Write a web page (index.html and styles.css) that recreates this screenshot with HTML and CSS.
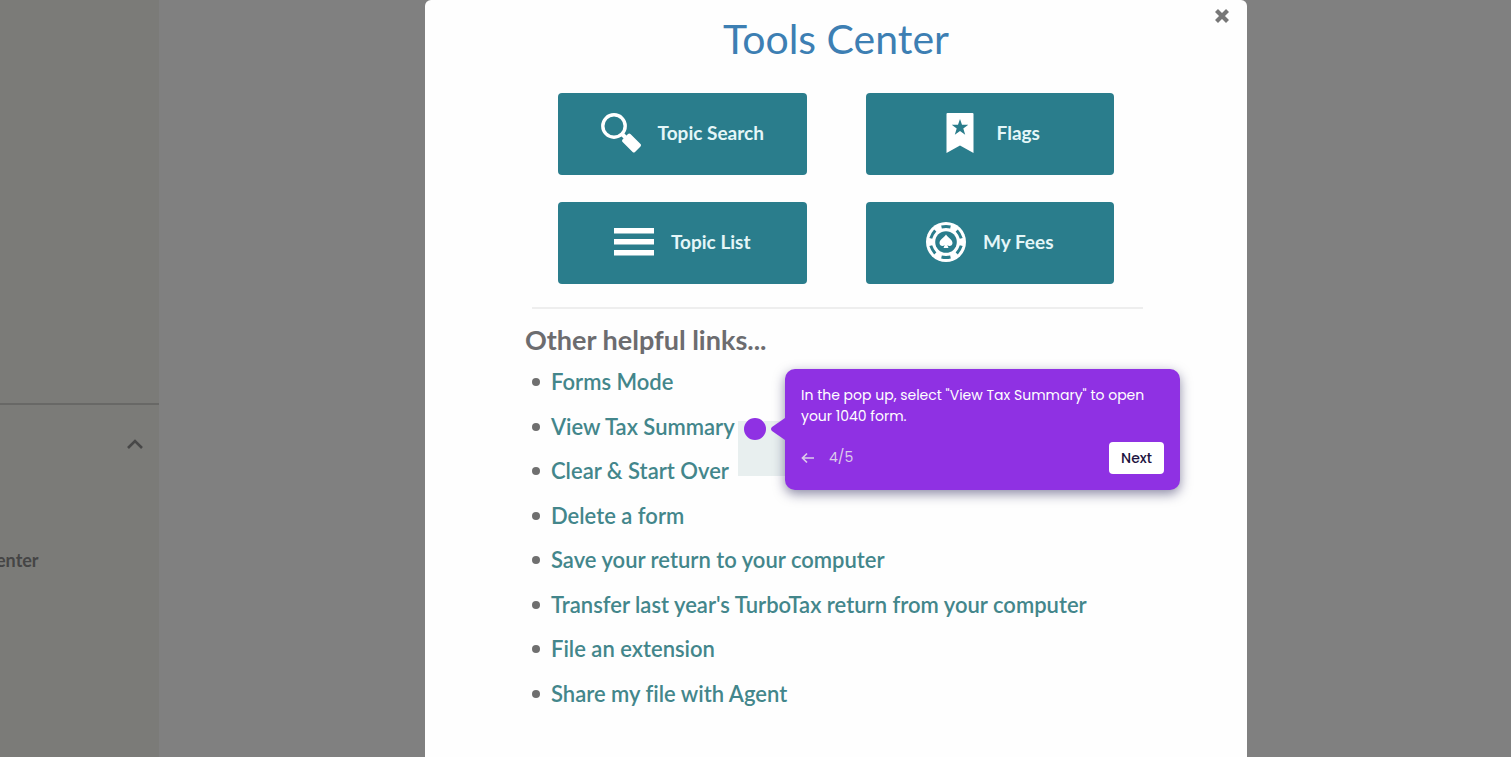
FILE: index.html
```html
<!DOCTYPE html>
<html lang="en">
<head>
<meta charset="utf-8">
<meta name="viewport" content="width=device-width, initial-scale=1">
<title>Tools Center</title>
<link rel="stylesheet" href="styles.css">
</head>
<body class="page">
  <aside class="sidebar">
    <section class="sidebar-top"></section>
    <section class="sidebar-menu">
      <button class="collapse" type="button" aria-label="Collapse">
        <svg width="18" height="12" viewBox="0 0 18 12"><path d="M2 10 9 3l7 7" fill="none" stroke="currentColor" stroke-width="2.6"/></svg>
      </button>
      <a class="sidebar-link" href="#">enter</a>
    </section>
  </aside>
  <main class="stage">
    <div class="modal" role="dialog" aria-labelledby="title">
      <button class="close" type="button" aria-label="Close">
        <svg width="16" height="16" viewBox="0 0 16 16"><path d="m2.500 2.500 11 11m0-11-11 11" stroke="currentColor" stroke-width="4.200"/></svg>
      </button>
      <h1 class="title" id="title">Tools Center</h1>
      <div class="tools">
        <button class="tool" type="button">
          <svg width="40" height="40" viewBox="0 0 40 40"><circle cx="13" cy="13" r="11.200" fill="none" stroke="#fff" stroke-width="3.400"/><path d="m20 20 5 5" stroke="#fff" stroke-width="4"/><path d="m21.500 26.500 5.500-5.500q1.500-.9 2.700.3L39.500 31q1 1.200 0 2.400L34 39q-1.200 1-2.400 0l-10-10q-1-1.200-.1-2.500z" fill="#fff"/></svg>
          <span>Topic Search</span>
        </button>
        <button class="tool" type="button">
          <svg width="40" height="40" viewBox="-6 0 40 40"><path fill="#fff" fill-rule="evenodd" d="M1.500 0h25q1 0 1 1v39L14 32.500.5 40V1q0-1 1-1zM14 6l-2 5.800H5.700l5 3.700-1.900 6.300 5.200-3.700 5.200 3.700-1.900-6.300 5-3.700H16z"/></svg>
          <span>Flags</span>
        </button>
        <button class="tool" type="button">
          <svg width="40" height="28" viewBox="0 0 40 28"><path fill="#fff" d="M0 0h40v5.500H0zM0 11h40v5.500H0zM0 22h40v5.500H0z"/></svg>
          <span>Topic List</span>
        </button>
        <button class="tool" type="button">
          <svg width="40" height="40" viewBox="0 0 40 40"><circle cx="20" cy="20" r="20" fill="#fff"/><g fill="none" stroke="#2a7d8c" stroke-width="3"><path id="notch" d="M15.500 5q4.500-1 9 0"/><use href="#notch" transform="rotate(60 20 20)"/><use href="#notch" transform="rotate(120 20 20)"/><use href="#notch" transform="rotate(180 20 20)"/><use href="#notch" transform="rotate(240 20 20)"/><use href="#notch" transform="rotate(300 20 20)"/></g><circle cx="20" cy="20" r="10.800" fill="#2a7d8c"/><path fill="#fff" d="M20 12.500c1.500 3 6.500 5 6.500 8.500 0 3-3.500 3.800-5.200 2l1.200 3h-5l1.200-3c-1.700 1.800-5.200 1-5.200-2 0-3.500 5-5.500 6.500-8.500z"/></svg>
          <span>My Fees</span>
        </button>
      </div>
      <hr class="divider">
      <h2 class="subtitle">Other helpful links...</h2>
      <ul class="links">
        <li><a href="#">Forms Mode</a></li>
        <li>
          <a href="#">View Tax Summary</a>
          <div class="hint">
            <span class="hint-dot"></span>
            <svg class="hint-arrow" width="14" height="22" viewBox="0 0 14 22"><path fill="#8f31e3" d="M14 0v22L1 13q-2-2 0-4z"/></svg>
            <div class="hint-card">
              <p class="hint-text">In the pop up, select "View Tax Summary" to open your 1040 form.</p>
              <div class="hint-bar">
                <button class="hint-back" type="button" aria-label="Back">
                  <svg width="14" height="12" viewBox="0 0 14 12"><path d="M6 1.500 1.500 6 6 10.500M1.500 6H13" fill="none" stroke="currentColor" stroke-width="1.700"/></svg>
                </button>
                <span class="hint-step">4/5</span>
                <button class="hint-next" type="button">Next</button>
              </div>
            </div>
          </div>
        </li>
        <li><a href="#">Clear &amp; Start Over</a></li>
        <li><a href="#">Delete a form</a></li>
        <li><a href="#">Save your return to your computer</a></li>
        <li><a href="#">Transfer last year's TurboTax return from your computer</a></li>
        <li><a href="#">File an extension</a></li>
        <li><a href="#">Share my file with Agent</a></li>
      </ul>
    </div>
  </main>
</body>
</html>
```
FILE: styles.css
```css
* { box-sizing: border-box; }

.page {
  margin: 0;
  min-height: 100vh;
  display: grid;
  grid-template-columns: 159px 1fr;
  background: #808080;
  font-family: "Avenir Next", Lato, sans-serif;
  font-variant-ligatures: none;
}

button {
  border: 0;
  padding: 0;
  background: none;
  font: inherit;
  cursor: pointer;
}

svg { display: block; flex: none; }

.sidebar {
  display: grid;
  grid-template-rows: 405px 1fr;
  background: #7b7b78;
  color: #454545;
}

.sidebar-top { border-bottom: 2px solid #686866; }

.sidebar-menu {
  display: flex;
  flex-direction: column;
  align-items: flex-start;
  gap: 98px;
  padding: 33px 15px 0 0;
}

.collapse { align-self: flex-end; color: #484848; }

.sidebar-link {
  color: inherit;
  font-size: 18px;
  font-weight: 700;
  line-height: 24px;
  text-decoration: none;
  margin-left: -4px;
}

.stage {
  display: flex;
  justify-content: center;
  padding-left: 2px;
}

.modal {
  position: relative;
  width: 822px;
  max-width: 100%;
  padding: 15px 100px 40px;
  background: #fefefe;
  border-radius: 6px 6px 0 0;
}

.close {
  position: absolute;
  top: 8px;
  right: 17px;
  color: #777;
}

.title {
  margin: 0;
  color: #3d7fb3;
  font-size: 41px;
  font-weight: 400;
  line-height: 48px;
  text-align: center;
}

.tools {
  display: grid;
  grid-template-columns: 1fr 1fr;
  grid-auto-rows: 82px;
  gap: 27px 59px;
  margin: 30px 33px 0;
}

.tool {
  display: flex;
  align-items: center;
  justify-content: center;
  gap: 17px;
  padding-bottom: 3px;
  border-radius: 4px;
  background: #2a7d8c;
  color: #e4f6f8;
  font-size: 19px;
  font-weight: 700;
}

.divider {
  margin: 23px 4px 0 7px;
  border: 0;
  border-top: 2px solid #eee;
}

.subtitle {
  margin: 14px 0 0;
  color: #6c6c6f;
  font-size: 27px;
  font-weight: 700;
  line-height: 34px;
}

.links {
  display: grid;
  grid-auto-rows: 1fr;
  min-height: 356px;
  margin: 3px 0 0;
  padding: 0;
  list-style: none;
}

.links li {
  position: relative;
  display: flex;
  align-items: center;
  gap: 11px;
  padding-left: 7px;
}

.links li::before {
  content: "";
  width: 8px;
  height: 8px;
  border-radius: 50%;
  background: #6f6f6f;
}

.links a {
  color: #43868b;
  font-size: 22px;
  font-weight: 600;
  line-height: 30px;
  text-decoration: none;
}

.hint {
  position: absolute;
  z-index: 1;
  top: 16px;
  left: 213px;
  width: 47px;
  height: 55px;
  background: #e8efef;
}

.hint-dot {
  position: absolute;
  top: -3px;
  left: 6px;
  width: 22px;
  height: 22px;
  border-radius: 50%;
  background: #8f31e3;
}

.hint-arrow {
  position: absolute;
  z-index: 1;
  top: -3px;
  left: 33px;
}

.hint-card {
  position: absolute;
  top: -52px;
  left: 47px;
  width: 395px;
  padding: 16px;
  border-radius: 10px;
  background: #8f31e3;
  box-shadow: 0 4px 12px rgba(30, 25, 80, 0.5);
  color: #fff;
  font-family: Poppins, "Open Sans", sans-serif;
  font-size: 14px;
  line-height: 21px;
}

.hint-text { margin: 0 0 15px; }

.hint-bar { display: flex; align-items: center; color: #dccbea; }

.hint-back { margin-right: 14px; color: inherit; }

.hint-next {
  margin-left: auto;
  padding: 0 12px;
  border-radius: 4px;
  background: #fff;
  color: #1d1340;
  font-weight: 500;
  line-height: 32px;
}
```
